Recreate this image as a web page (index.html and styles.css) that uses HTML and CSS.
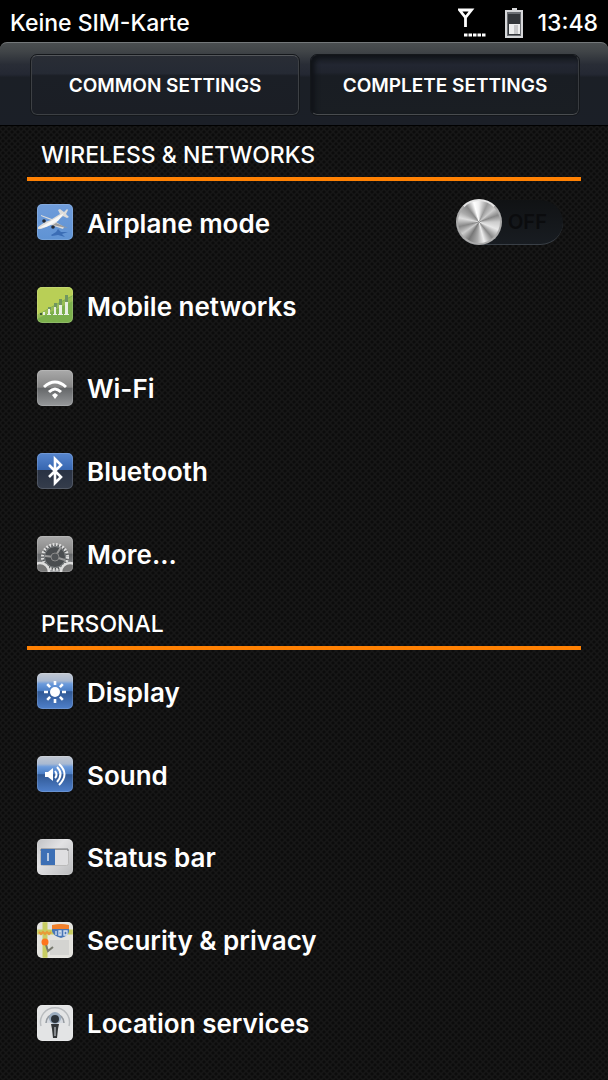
FILE: index.html
```html
<!DOCTYPE html>
<html lang="en">
<head>
<meta charset="utf-8">
<meta name="viewport" content="width=device-width">
<title>Settings</title>
<link rel="stylesheet" href="styles.css">
</head>
<body>
<div class="statusbar">
  <span class="carrier">Keine SIM-Karte</span>
  <svg class="signal" width="28" height="30" viewBox="0 0 28 30"><path d="M1.500 2h12L7.500 9.500zM7.500 8v11" fill="none" stroke="#fff" stroke-width="2.800"/><path d="M6 27h22" stroke="#fff" stroke-width="3" stroke-dasharray="3.500 1"/></svg>
  <svg class="battery" width="19" height="30" viewBox="0 0 19 30"><path d="M7 0h5v2h6v28H0V2h7z" fill="#d6d7d9"/><path d="M2 4h14v24H2z" fill="#6b6e73"/><path d="M3 6h12v21H3z" fill="#33363a"/><path d="M4 16h11v10H4z" fill="#eee"/><path d="M9 17h4v9H9z" fill="#c8c8ca"/></svg>
  <time class="clock">13:48</time>
</div>
<nav class="tabs">
  <button class="tab" type="button">COMMON SETTINGS</button>
  <button class="tab tab-active" type="button" aria-pressed="true">COMPLETE SETTINGS</button>
</nav>
<svg class="defs" width="0" height="0" aria-hidden="true">
  <defs>
    <linearGradient id="sky" x2="0" y2="1"><stop stop-color="#6f9cda"/><stop offset="1" stop-color="#5f93d4"/></linearGradient>
    <linearGradient id="gray" x2="0" y2="1"><stop stop-color="#aaa"/><stop offset=".48" stop-color="#858585"/><stop offset=".5" stop-color="#646668"/><stop offset="1" stop-color="#97999b"/></linearGradient>
    <linearGradient id="blue" x2="0" y2="1"><stop stop-color="#c3c9d2"/><stop offset=".22" stop-color="#a9b9d1"/><stop offset=".3" stop-color="#6c9bdc"/><stop offset=".49" stop-color="#4c7fc6"/><stop offset=".52" stop-color="#305894"/><stop offset="1" stop-color="#4f80cb"/></linearGradient>
    <linearGradient id="bt" x2="0" y2="1"><stop stop-color="#5887cf"/><stop offset=".46" stop-color="#3767b1"/><stop offset=".48" stop-color="#293244"/><stop offset="1" stop-color="#353d4b"/></linearGradient>
    <linearGradient id="silver" x2="1" y2="1"><stop stop-color="#c0c1c4"/><stop offset=".4" stop-color="#e2e2e4"/><stop offset="1" stop-color="#b9babc"/></linearGradient>
    <clipPath id="tile"><rect width="36" height="36" rx="5"/></clipPath>
  </defs>
</svg>
<main class="settings">
  <section>
    <h2 class="heading">WIRELESS &amp; NETWORKS</h2>
    <ul class="list">
      <li class="row">
        <svg class="icon" viewBox="0 0 36 36"><g clip-path="url(#tile)"><path fill="url(#sky)" d="M0 0h36v36H0z"/><path d="m14 31 5-3 2-3 3 3 7 0-6 2 3 3-7-2-6 1z" fill="#3b6db5"/><path d="m4 11 11 4 8-5-2-4 2-1 4 3 3-3 1 1-2 4 3 3-2 1-4-2-7 6 8 5-1 2-12-4-10 4-3 0 0-2 7-5 6-2-10-4z" fill="#dddcda"/><path d="m2 24 17-10 8-5-6 8-12 6z" fill="#f8f8f7"/><path d="m19 19 12 5-6-1-9-2" fill="#9b9a99"/><circle cx="7" cy="17" r="1.800" fill="#252a34"/><circle cx="16" cy="23" r="1.800" fill="#252a34"/></g><rect class="rim" x=".5" y=".5" width="35" height="35" rx="5"/></svg>
        <label class="label" for="airplane">Airplane mode</label>
        <span class="switch"><input class="switch-input" id="airplane" type="checkbox" role="switch"><span class="knob"></span><span class="state">OFF</span></span>
      </li>
      <li class="row">
        <svg class="icon" viewBox="0 0 36 36"><g clip-path="url(#tile)"><path fill="#7cb04c" d="M0 0h36v36H0z"/><path fill="#b9cf56" d="M0 0h36v8L21 16 0 28z"/><path fill="#98bd55" d="m0 28 36-19v5L0 32z"/><path d="M22 12h3v7h-3zM28 8h3v8h-3zM17 16h3v5h-3zM11 20h3v3h-3z" fill="#719661"/><path d="M6 25h2v3H6zM11 22h2v5h1v1h-4v-1h1zM17 20h2v7h1v1h-4v-1h1zM22 18h3v9h1v1h-5v-1h1zM28 15h3v12h1v1h-5v-1h1z" fill="#e9efe3"/><path d="M3 26h2v2H3z" fill="#415f37"/></g><rect class="rim" x=".5" y=".5" width="35" height="35" rx="5"/></svg>
        <a class="label" href="#mobile">Mobile networks</a>
      </li>
      <li class="row">
        <svg class="icon" viewBox="0 0 36 36"><rect width="36" height="36" rx="5" fill="url(#gray)"/><path d="M7 17q11-10 22 0M12 22q6-6 12 0" fill="none" stroke="#fff" stroke-width="3"/><path d="m15 25 3-2 3 2-3 4z" fill="#fff"/><rect class="rim" x=".5" y=".5" width="35" height="35" rx="5"/></svg>
        <a class="label" href="#wifi">Wi-Fi</a>
      </li>
      <li class="row">
        <svg class="icon" viewBox="0 0 36 36"><rect width="36" height="36" rx="5" fill="url(#bt)"/><path d="m12 12 12 12-6 6V6l6 6-12 12" fill="none" stroke="#fff" stroke-width="2.600"/><rect class="rim" x=".5" y=".5" width="35" height="35" rx="5"/></svg>
        <a class="label" href="#bluetooth">Bluetooth</a>
      </li>
      <li class="row">
        <svg class="icon" viewBox="0 0 36 36"><g clip-path="url(#tile)"><path fill="url(#gray)" d="M0 0h36v36H0z"/><circle cx="18" cy="21" r="12.500" fill="#55585a" stroke="#ddd" stroke-width="3" stroke-dasharray="1.800 1.500"/><circle cx="18" cy="21" r="10.500" fill="#4a4d50" stroke="#85888a" stroke-width="1"/><path d="m18 21 6-10M18 21 8 20M18 21l10 3" stroke="#999" stroke-width="2"/><circle cx="18" cy="21" r="4" fill="#505356" stroke="#888"/><circle cx="3" cy="36" r="9" fill="#777" stroke="#ddd" stroke-width="2.500"/><circle cx="33" cy="36" r="9" fill="#777" stroke="#ddd" stroke-width="2.500"/></g><rect class="rim" x=".5" y=".5" width="35" height="35" rx="5"/></svg>
        <a class="label" href="#more">More...</a>
      </li>
    </ul>
  </section>
  <section>
    <h2 class="heading">PERSONAL</h2>
    <ul class="list">
      <li class="row">
        <svg class="icon" viewBox="0 0 36 36"><rect width="36" height="36" rx="5" fill="url(#blue)"/><circle cx="18" cy="19" r="5" fill="#fff"/><path d="M18 8v4m0 14v4M7 19h4m14 0h4M10.200 11.200l2.900 2.900m9.800 9.800 2.900 2.900m0-15.600-2.900 2.900m-9.800 9.800-2.900 2.900" stroke="#fff" stroke-width="2.600"/><rect class="rim" x=".5" y=".5" width="35" height="35" rx="5"/></svg>
        <a class="label" href="#display">Display</a>
      </li>
      <li class="row">
        <svg class="icon" viewBox="0 0 36 36"><rect width="36" height="36" rx="5" fill="url(#blue)"/><path d="M8 16h3l5-4v13l-5-4H8z" fill="#fff"/><path d="M18 15q3 4 0 7M20 11q7 7 0 15M22 8q11 10 0 21" fill="none" stroke="#fff" stroke-width="2"/><rect class="rim" x=".5" y=".5" width="35" height="35" rx="5"/></svg>
        <a class="label" href="#sound">Sound</a>
      </li>
      <li class="row">
        <svg class="icon" viewBox="0 0 36 36"><rect width="36" height="36" rx="5" fill="url(#silver)"/><rect x="3.500" y="10.500" width="28" height="16" rx="2" fill="#dfdfe1" stroke="#bbb"/><path d="M4 12v-2h27v2" fill="none" stroke="#77797c"/><path d="M4 10h14v16H4z" fill="#3c6fb5"/><path d="M11 14v8" stroke="#dce5f0" stroke-width="1.500"/><rect class="rim" x=".5" y=".5" width="35" height="35" rx="5"/></svg>
        <a class="label" href="#statusbar">Status bar</a>
      </li>
      <li class="row">
        <svg class="icon" viewBox="0 0 36 36"><g clip-path="url(#tile)"><path fill="#e4e3de" d="M0 0h36v36H0z"/><path d="M0 10h36M8 0v36" stroke="#c8cd62" stroke-width="5"/><path d="m2 10 2 2 2-2 2 2 2-2 2 2 2-2" stroke="#e99a39" stroke-width="2" fill="none"/><path d="M13 18h19v15H13z" fill="#d4d4d1"/><path d="m9 23 2 6 5-4" fill="none" stroke="#77796e" stroke-width="2"/><circle cx="8" cy="20" r="3.500" fill="#ff751d"/><path d="M15 4q9-3 17 0v5q0 5-8 7-8-2-9-7z" fill="#4977b7"/><path d="M15 3q9-2 17 0v4H15z" fill="#f1802b"/><path d="M19 9v4m3-4h2v4h-2zm5 0h3v4h-3z" fill="none" stroke="#dce4f0" stroke-width="1.300"/></g><rect class="rim" x=".5" y=".5" width="35" height="35" rx="5"/></svg>
        <a class="label" href="#security">Security &amp; privacy</a>
      </li>
      <li class="row">
        <svg class="icon" viewBox="0 0 36 36"><rect width="36" height="36" rx="5" fill="#e3e4e5"/><path d="M4 21a14.500 14.500 0 1 1 28 0" fill="none" stroke="#b9bcbf" stroke-width="1.500"/><path d="M9 18a9 9 0 1 1 18 0" fill="#d5d9df" stroke="#969ba1" stroke-width="1.500"/><circle cx="18" cy="13" r="6" fill="#9aabbe"/><circle cx="18" cy="14" r="4" fill="#2c333a"/><path d="M14 19h8l-1 5-1 9h-4l-1-9z" fill="#333638"/><path d="M17 22h2v9h-2z" fill="#85898d"/><rect class="rim" x=".5" y=".5" width="35" height="35" rx="5"/></svg>
        <a class="label" href="#location">Location services</a>
      </li>
    </ul>
  </section>
</main>
</body>
</html>
```
FILE: styles.css
```css
* {
  box-sizing: border-box;
}

body {
  margin: 0;
  background-color: #171717;
  background-image:
    radial-gradient(circle, #0c0c0c 1px, transparent 2px),
    radial-gradient(circle, #0c0c0c 1px, transparent 2px);
  background-position: 0 0, 3px 3px;
  background-size: 6px 6px;
  color: #fff;
  font-family: Inter, "Liberation Sans", sans-serif;
  font-weight: 500;
}

.defs {
  position: absolute;
}

.statusbar {
  display: flex;
  align-items: center;
  height: 42px;
  padding: 3px 10px 0;
  background: #000;
  font-size: 23px;
}

.carrier {
  flex: 1;
}

.battery {
  margin: 0 13px 0 19px;
}

.tabs {
  display: flex;
  gap: 12px;
  padding: 12px 29px 10px 31px;
  border-top: 1px solid #74787a;
  border-bottom: 1px solid #000;
  border-radius: 7px 7px 0 0;
  background: linear-gradient(#4a4e50, #414548 10%, #292d36 26%, #242833 38%, #1b1f26 42%, #1b1f27);
  box-shadow: 0 -8px 0 #000;
}

.tab {
  flex: 1;
  height: 60px;
  padding: 0;
  border: 1px solid #3d4044;
  border-top-color: #54575b;
  border-radius: 6px;
  outline: 1px solid #14171b;
  background: linear-gradient(#292d35, #252a34 30%, #1b1f26 34%, #1b1e25);
  color: #fff;
  font: inherit;
  font-size: 19px;
  font-weight: 600;
  white-space: nowrap;
}

.tab-active {
  border-color: #111419 #383b3f #494c4f #111419;
  background: linear-gradient(#1b1f26, #222631 16%, #20242e 28%, #191d23 34%, #1a1e23);
  box-shadow: inset 3px 2px 5px #101318;
}

.heading {
  display: flex;
  align-items: center;
  height: 55px;
  margin: 0 27px;
  padding: 6px 14px 0;
  border-bottom: 4px solid #ff8103;
  font-size: 23px;
  font-weight: 500;
}

.list {
  display: grid;
  grid-auto-rows: 1fr;
  min-height: 414px;
  margin: 0;
  padding: 0;
  list-style: none;
}

.row {
  display: flex;
  align-items: center;
  padding: 0 45px 0 37px;
}

.icon {
  width: 36px;
  height: 36px;
  margin-right: 14px;
}

.rim {
  fill: none;
  stroke: #fff;
  stroke-opacity: .15;
}

.label {
  flex: 1;
  padding-top: 2px;
  color: #fff;
  font-size: 26px;
  font-weight: 600;
  text-decoration: none;
}

.switch {
  position: relative;
  display: flex;
  align-items: center;
  width: 107px;
  height: 45px;
  border-bottom: 1px solid #393f46;
  border-radius: 23px;
  background: linear-gradient(#101214, #181c21);
}

.switch-input {
  position: absolute;
  inset: 0;
  width: 100%;
  height: 100%;
  margin: 0;
  opacity: 0;
}

.knob {
  width: 46px;
  height: 46px;
  border: 2px solid #aaa;
  border-top-color: #e5e5e5;
  border-radius: 50%;
  background: conic-gradient(#eee, #999 25deg, #ccc 50deg, #888 70deg, #ccc 90deg, #e8e8e8 112deg, #888 140deg, #eee 165deg, #aaa 185deg, #777 210deg, #ccc 235deg, #888 257deg, #ddd 282deg, #aaa 300deg, #888 322deg, #fff 345deg, #eee);
}

.state {
  margin-left: 6px;
  color: #0b0c0e;
  font-size: 20px;
  font-weight: 600;
}
```
